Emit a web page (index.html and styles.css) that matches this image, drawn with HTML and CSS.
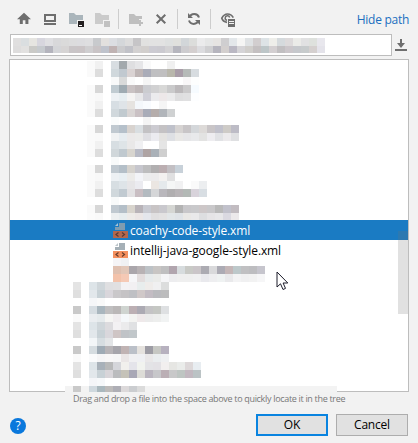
FILE: index.html
```html
<!DOCTYPE html>
<html lang="en">
<head>
<meta charset="utf-8">
<title>Select Path</title>
<link rel="stylesheet" href="styles.css">
</head>
<body>
<main class="dialog">
  <header class="toolbar">
    <svg class="icon home" viewBox="14 9 20 20"><path fill="#6e6e6e" d="M24 12.800 17 19.300h2.800V24h3v-3.800h2.600V24h3v-4.700H31z"/></svg>
    <svg class="icon desktop" viewBox="40 9 20 20"><path fill="#6e6e6e" fill-rule="evenodd" d="M44 14h12v8H44zM46 16v4h8V16zM44 23h12v2H44z"/></svg>
    <svg class="icon project" viewBox="66 9 20 20"><path fill="#aab5bb" d="M69 13h5l2 2h7v5h-6v4h-8z"/><path fill="#231f20" d="M78 21h6v6h-6z"/><path fill="#fff" d="M79 25h3v1h-3z"/></svg>
    <svg class="icon module" viewBox="92 9 20 20"><path fill="#cbcbcb" d="M95 13h5l2 2h7v5h-6v4h-8z"/><path fill="#c1c1c1" d="M104 21h6v6h-6z"/></svg>
    <i class="sep"></i>
    <svg class="icon new-folder" viewBox="126 9 20 20"><path fill="#bfbfbf" d="M129 14h5l2 2h6v3h-3v3h-2v2h-8zM139 20h2v2h2v2h-2v2h-2v-2h-2v-2h2z"/></svg>
    <svg class="icon delete" viewBox="151 9 20 20"><path stroke="#6e6e6e" stroke-width="2" d="m156.700 14.700 8.600 8.600m0-8.600-8.600 8.600"/></svg>
    <i class="sep"></i>
    <svg class="icon refresh" viewBox="184 9 20 20"><g fill="none" stroke="#6e6e6e" stroke-width="2"><path d="M189.500 17.500a5 5 0 0 1 9.500 0M198.500 20.500a5 5 0 0 1-9.500 0"/></g><path fill="#6e6e6e" d="M188 13v5h5zM200 25v-5h-5z"/></svg>
    <i class="sep"></i>
    <svg class="icon hidden-files" viewBox="218 9 20 20"><path fill="none" stroke="#6e6e6e" stroke-width="1.700" d="M227 22.300c-3-.5-4.700-2.500-5.200-4.100 1.500-2.800 3.300-4.200 5.700-4.200s4.500 1.400 5.800 3.600"/><path fill="none" stroke="#6e6e6e" stroke-width="1.500" d="M227 20.300a2.300 2.300 0 1 1 2.700-2.800"/><path fill="#6e6e6e" d="M228 19h7v8h-7z"/><path fill="#f2f2f2" d="M229 21h5v1h-5zM229 23h5v1h-5z"/></svg>
    <a class="hide-path">Hide path</a>
  </header>
  <div class="path-row">
    <div class="path-field"><svg class="mosaic" data-block="path"></svg></div>
    <svg class="history" viewBox="395 39 12 12"><path fill="#6e6e6e" d="M400 39h2v4h3l-4 5-4-5h3zM395 49h12v2h-12z"/></svg>
  </div>
  <section class="tree">
    <svg class="mosaic upper" data-block="upper"></svg>
    <div class="file selected">
      <svg class="file-icon" viewBox="0 0 15 15"><path fill="#7f9cb0" d="M6 0h6v7H2V4h4z"/><path fill="#a9c3d5" d="M5 0v3H2z"/><path fill="#b2674d" d="M0 8h15v7H0z"/><path fill="none" stroke="#5a3a35" stroke-width="1.200" d="M5.500 9.500 3 11.500l2.500 2m3.500-4 2.500 2-2.500 2"/></svg>
      <span class="name first">coachy-code-style.xml</span>
    </div>
    <div class="file">
      <svg class="file-icon" viewBox="0 0 15 15"><path fill="#a5b0b7" d="M6 0h6v7H2V4h4z"/><path fill="#bdc6cb" d="M5 0v3H2z"/><path fill="#f4905f" d="M0 8h15v7H0z"/><path fill="none" stroke="#6a3d2b" stroke-width="1.200" d="M5.500 9.500 3 11.500l2.500 2m3.500-4 2.500 2-2.500 2"/></svg>
      <span class="name second">intellij-java-google-style.xml</span>
    </div>
    <svg class="mosaic lower" data-block="lower"></svg>
    <i class="scrollbar"></i>
    <svg class="cursor" viewBox="0 0 13 20"><path fill="#fff" stroke="#1c1c2b" d="M1 1v15l3.500-3.200L7 18.500l2.500-1.100L7.100 12h4.700z"/></svg>
  </section>
  <p class="hint">Drag and drop a file into the space above to quickly locate it in the tree</p>
  <footer class="actions">
    <span class="help">?</span>
    <button class="button primary">OK</button>
    <button class="button">Cancel</button>
  </footer>
</main>
<script src="mosaic.js"></script>
</body>
</html>
```

FILE: styles.css
```css
* { box-sizing: border-box; }
body { margin: 0; background: #f2f2f2; color: #000; font: 12px/16px "Open Sans", "Noto Sans", sans-serif; }
.dialog { width: 418px; height: 443px; overflow: hidden; }
svg { display: block; flex: none; }
.toolbar { height: 34px; padding: 9px 9px 0 14px; display: flex; align-items: flex-start; }
.icon { width: 20px; height: 20px; }
.desktop, .project, .module { margin-left: 6px; }
.delete { margin-left: 5px; }
.new-folder { margin-left: 7px; }
.refresh { margin-left: 6px; }
.hidden-files { margin-left: 7px; }
.sep { width: 1px; height: 20px; margin-left: 6px; background: #cdcdcd; }
.hide-path { margin: 3px 0 0 auto; color: #1a6fc0; letter-spacing: -0.28px; white-space: nowrap; }
.path-row { height: 22px; margin-left: 10px; display: flex; align-items: center; gap: 3px; }
.path-field { width: 382px; height: 22px; padding: 3px 2px; border: 1px solid #bdbdbd; background: #fff; }
.history { width: 12px; height: 12px; }
.tree { position: relative; width: 400px; height: 333px; margin: 3px 0 0 9px; padding-top: 1px; border: 1px solid #bdbdbd; background: #fff; }
.upper { margin-left: 77px; }
.lower { margin: -2px 0 0 55px; }
.file { height: 20px; padding-left: 103px; display: flex; align-items: center; }
.selected { background: #1a7bc3; color: #fff; }
.file-icon { width: 15px; height: 15px; margin-top: 1px; }
.name { margin-left: 2px; padding-top: 2px; white-space: nowrap; }
.first { letter-spacing: -0.13px; }
.second { letter-spacing: -0.1px; }
.scrollbar { position: absolute; right: 0; top: 171px; width: 10px; height: 83px; background: rgba(115, 115, 115, .21); }
.cursor { position: absolute; left: 266px; top: 211px; width: 13px; height: 20px; }
.hint { height: 14px; margin: 0 0 0 73px; color: #787878; font-size: 9px; line-height: 14px; letter-spacing: -0.32px; white-space: nowrap; }
.actions { height: 30px; margin-top: 8px; padding: 0 10px; display: flex; align-items: flex-start; gap: 8px; }
.help { width: 16px; height: 16px; margin: 4px auto 0 0; border-radius: 50%; background: #0a78dc; color: #fff; text-align: center; line-height: 16px; }
.button { width: 72px; height: 22px; padding: 0; border: 1px solid #adadad; background: #e1e1e1; color: #000; font: inherit; letter-spacing: -0.2px; }
.primary { border: 2px solid #0a84e0; }
```

FILE: mosaic.js
```js
// Each token is one 8px cell: "." is empty, two digits are a gray, six are a full colour.
const blocks = {
  path: { width: 312, height: 15, rows: `
e0dfdf dadee0 e6e5e1 d7d6de dfdfe2 d8d8da dadada dcdcdd dcdcdf dedee0 c8cacd e2e0de dcdee2 d4d7da dcdcdc c6c5c7 e1e1e0 e2 e2e2e2 dee0e0 e0e0dd d2d6d9 dcdddb ebebec e5e6e6 e6e4e2 cfced0 e3e7ea f5f5f4 dfe2e4 d2cecf dde3e6 eeeeea d5dadd dddadb ebebe8 e1e1e2 dee1dd e8e7ed
dedddd e2e1e0 cacac7 c6cace b4b4bd d4d5d8 d6d4d4 c9c5c7 cac4c6 cfced0 c9c4c6 bfc3cc c0b3b3 cbcbcd c1c2c8 d3d1d1 d2cfcd cccbd2 cbcad0 d3d2d4 b6b6be cdcccf d4cfcf dcdcdf cfcfd1 b6b5be d3cfce bab8c3 d5d4d7 d0cecb c4c0c1 bdc6c8 d3cfd1 c1bfc1 cbc6ca c6c8cc c7cbcc d5d0cf e4e3ea` },
  upper: { width: 160, height: 159, rows: `
fa f1 . d8dde1 a3a9ad dfdfe1 e6e6e8 f9 . . f0
fa dd . d0d8dc c1c9d0 dad3d3 bfb6b6 aaacb8 bfbfc1 c0bfc0 b9b7ac a99da8 b6bab8 d7dce0
. . . f8f9f9 d9dada fa . f5 . . . . f9f7f8 fdfefe
fa d7 . c0cbd1 9fabb2 c9c2c3 bfb8b9 cbccd0 d1d1d2 d8d8d7 cacacb bcb9bb cbcacb f6fbff
fa f8 . edf1f4 e7eef1 f5f4f3 e8e8ea d0d0d8 ebebed ede8e9 ebebec dededf e0e0e1 fdfeff
fa f1 . d7dee3 dfe4e8 e6e3e0 f4f7fb f9fbfe . f5
fa dd . d0d8dc c1cacf d9d5d4 cac1c4 a9acb8 b5adab b1b5ba cfd1d2
. . . fafcfc . . . f4
fa d7 . c0c9d0 b5c0ca d8d3cf d9dee1 c3c2c4 cccbd1 c4c2c4 bfc1ca d6d3d2 c8c5c7 d4d7da dddad8 c9c5c7 c1c1cb cecbc7 bdbcc6
fa f9 . f0f2f3 e6ecf0 ebe9e9 ebebea dfdfe3 ebebf0 e4e3e1 dee0e4 e9e8e6 e6e6e8 e8e9eb e3e3e2 eeedf0 e1e2e5 eceaec dfe0e2
fa f1 . d7dee2 dee4e7 e9e8e8 f0f0f2 . . e5
fa dd . d0d7da c0c9cf d8d5cf b8bac5 afa4a4 aab1b8 cfcfcf
. . . f8fafa
fa d7 . c0c9d0 b4bfc8 d5d2cd c6c6cd bdbdbe b1afb0 bbaeb1 c2bfc3 c8d1d9
fa f8 . edf1f4 e8eff3 ecebe9 f3f4f8 ececed ecebec f3f1f0 e0e0e1 fefefe
fa f1 . d7dee2 dee4e8 e6e5e7 ebebf0 . ebe6e2 e5e9ec f5f6f6 f1f1f2 . fafafa eceef0
fa dd . d0d8dc c1cad1 e2e1e3 c9bec3 b3bac0 d5d6d8 b9b7bc b0aeb0 b8b4b7 b3b9b6 d8d3db d8dee3
. . . f8fafa
fa d7 . c0c9d0 b4bfc8 d8d4cd b8b3b8 c9cad1 c8c4c5 c9c8cd d5d6d3 b3b3b3 c8c7ca c9c9cb cdc7c8 c9c8ca b9b9b9 c1c1cb c2bcc1
fb f9 . edf0f1 e7edef edebe9 ebe6e6 e4e6ec e0dfe0 e3e2e2 e2e6e8 dfe3e7 e9e8e6 e9e9ea dddee0 e5e4e6 e7e7e9 dad9e1 ece9eb` },
  lower: { width: 272, height: 134, inset: 8, strip: 128, rows: `
. . . . . f5f4f6 f0f1f3
. . . . . dfc0b0 e2c7b8 aaa6ab b8b2b4 bdc2c6 c8c5c3 bfbfc0 b1a5ae d7dcde c9cac6 cac5c8 acabb2 d9d9db acabb4 c4b6b7 bdc8ca c0c0c2 bdbdc0 c6c5cd
. . . . . f3c2aa f5c9b5 f6f6f8 e3dddd e6eaeb eaebe9 f5f5f7 ededef efefef efefef f0f0f1 e9e9ed eeeef0 eff2f2 e9e9eb f3f3f4 f0f0f1 f2f2f2 f6f6f7
e4 . dde4e8 cfd6da dfdfe1 e1e0e1 f3f1f3 f2f0f2 e8eded efecea f0f0f1 dcdddd
df . e2e7eb c8d1d6 d9d6db cac8ca c5c3c5 bfc0c4 d0c8c8 c3bcc3 bababe bcbcbd
. . f5f6f8 f9f9f9
c9 . d5dce1 a9b6be c0bfc0 bab7b7 cfd4d0 bcafb3 acaab3 c4c3c5 c5c7c3 dee0e2
fa . eaedf0 e5eaec f5f5f3 f0edef f5f8fa f3f3f1 efe9ea ebebeb edeeed f1f3f3
e4 . dde4e8 cfd6da dcdbde f3f1f3 ebebec e0e1e3
df . e2e7eb c8d1d6 d9d7dc cfc5c5 c0c3c7 c1c7ca
. . f3f6f8 d6dde1 e3e5e7
c9 . d5dce0 9fabb5 b7b4b7 a6a5ab c0b3b3 bbc0c8 e5e2de 9d9ca4 c6c7c3 b7b1bf
fa . fafbfc f5f5f6 f8f7f7 f6f6f6 eae6e6 f0f0f2 eff0f3 e9e7e8 eaedef eff0f2
e4 . dde4e8 a8b1b9 b8b9b9 d5d6da f1f0ed e4e4ea f1f3ef e3e3e6 e3e1e5 f2efef e6e6e3 eaecea ddd8d9 e8edf1
df . e2e7eb c8d1d6 d8d5d9 bbbcbe c5c2b8 a9a8b6 dddcd7 bab5bf c7c7ca bbafb5 c8c8c9 bec5c2 c2b8c0 bbc3c5
. . f4f5f8 f6f8fa
c9 . cfd8de aab8be bdbbba aeaeb5 dcd9da cbcdd0 dbdbdb` }
};

document.querySelectorAll(".mosaic").forEach(svg => {
  const block = blocks[svg.dataset.block];
  svg.setAttribute("width", block.width);
  svg.setAttribute("height", block.height);
  let cells = block.strip ? `<rect y="${block.strip}" width="${block.width}" height="6" fill="#f3f3f3"/>` : "";
  block.rows.trim().split("\n").forEach((row, y) => row.split(" ").forEach((token, x) => {
    if (token === ".") return;
    const colour = token.length === 2 ? token.repeat(3) : token;
    cells += `<rect x="${(block.inset || 0) + x * 8}" y="${y * 8}" width="8" height="8" fill="#${colour}"/>`;
  }));
  svg.innerHTML = cells;
});
```
